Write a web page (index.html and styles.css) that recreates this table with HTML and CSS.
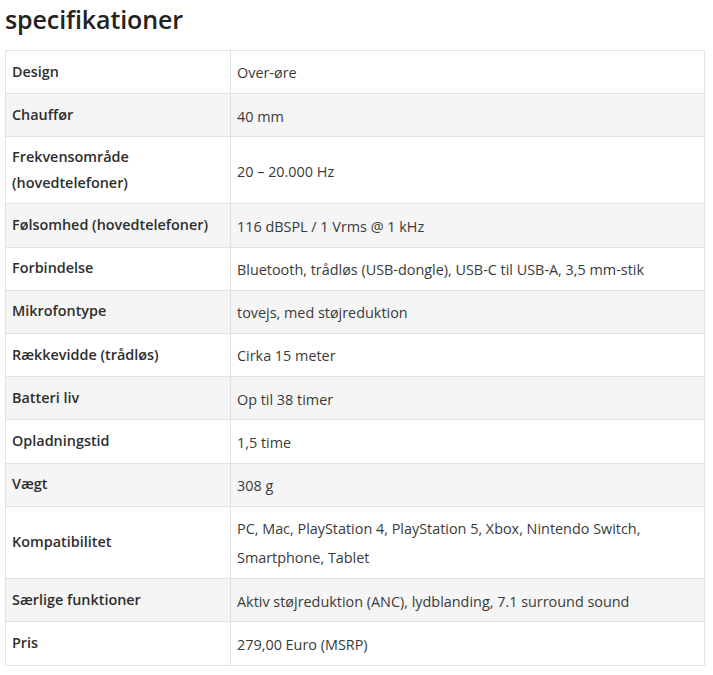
FILE: index.html
```html
<!DOCTYPE html>
<html lang="da">
<head>
<meta charset="utf-8">
<title>specifikationer</title>
<link rel="stylesheet" href="styles.css">
</head>
<body>
<h2 class="title">specifikationer</h2>
<table class="specs">
  <colgroup><col class="c-key"><col class="c-val"></colgroup>
  <tbody>
    <tr><th>Design</th><td>Over-øre</td></tr>
    <tr><th>Chauffør</th><td>40 mm</td></tr>
    <tr><th>Frekvensområde (hovedtelefoner)</th><td>20 – 20.000 Hz</td></tr>
    <tr><th>Følsomhed (hovedtelefoner)</th><td>116 dBSPL / 1 Vrms @ 1 kHz</td></tr>
    <tr><th>Forbindelse</th><td>Bluetooth, trådløs (USB-dongle), USB-C til USB-A, 3,5 mm-stik</td></tr>
    <tr><th>Mikrofontype</th><td>tovejs, med støjreduktion</td></tr>
    <tr><th>Rækkevidde (trådløs)</th><td>Cirka 15 meter</td></tr>
    <tr><th>Batteri liv</th><td>Op til 38 timer</td></tr>
    <tr><th>Opladningstid</th><td>1,5 time</td></tr>
    <tr><th>Vægt</th><td>308 g</td></tr>
    <tr><th>Kompatibilitet</th><td>PC, Mac, PlayStation 4, PlayStation 5, Xbox, Nintendo Switch, Smartphone, Tablet</td></tr>
    <tr><th>Særlige funktioner</th><td>Aktiv støjreduktion (ANC), lydblanding, 7.1 surround sound</td></tr>
    <tr><th>Pris</th><td>279,00 Euro (MSRP)</td></tr>
  </tbody>
</table>
</body>
</html>
```

FILE: styles.css
```css
html, body {
  margin: 0;
  background: #ffffff;
}
body {
  padding: 0 5px;
  font-family: "Open Sans", "Noto Sans", sans-serif;
  color: #3a3a3a;
}
.title {
  margin: 0;
  padding-top: 2px;
  height: 48px;
  font-size: 25px;
  font-weight: 600;
  line-height: 34px;
  color: #222;
  letter-spacing: -0.1px;
}
.specs {
  width: 700px;
  border-collapse: collapse;
  table-layout: fixed;
  font-size: 14.4px;
}
.c-key { width: 225px; }
.specs th,
.specs td {
  border: 1px solid #e2e2e2;
  text-align: left;
  vertical-align: middle;
}
.specs th {
  padding: 6.5px 6px 7.5px;
  font-weight: 600;
  line-height: 26px;
  color: #2e2e2e;
}
.specs td {
  padding: 7.4px 6px 5.4px;
  line-height: 29.4px;
  font-weight: 400;
}
.specs tr:nth-child(even) {
  background: #f5f5f5;
}
```
